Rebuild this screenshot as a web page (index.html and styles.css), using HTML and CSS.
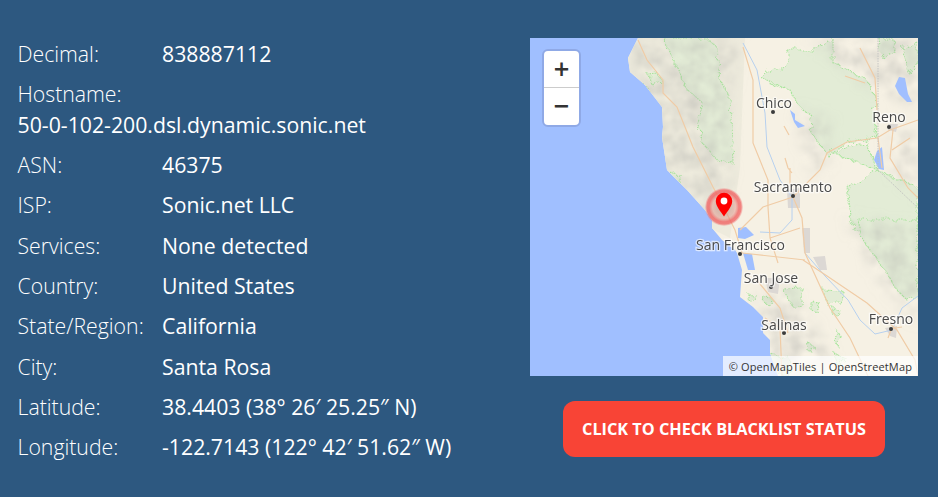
FILE: index.html
```html
<!DOCTYPE html>
<html lang="en">
<head>
<meta charset="utf-8">
<title>IP details</title>
<link rel="stylesheet" href="styles.css">
</head>
<body>
<main class="panel">
  <section class="details">
    <div class="row"><span class="label">Decimal:</span><span class="value">838887112</span></div>
    <div class="row stacked"><span class="label">Hostname:</span><span class="value">50-0-102-200.dsl.dynamic.sonic.net</span></div>
    <div class="row"><span class="label">ASN:</span><span class="value">46375</span></div>
    <div class="row"><span class="label">ISP:</span><span class="value">Sonic.net LLC</span></div>
    <div class="row"><span class="label">Services:</span><span class="value">None detected</span></div>
    <div class="row"><span class="label">Country:</span><span class="value">United States</span></div>
    <div class="row"><span class="label">State/Region:</span><span class="value">California</span></div>
    <div class="row"><span class="label">City:</span><span class="value">Santa Rosa</span></div>
    <div class="row"><span class="label">Latitude:</span><span class="value">38.4403 (38° 26′ 25.25″ N)</span></div>
    <div class="row"><span class="label">Longitude:</span><span class="value">-122.7143 (122° 42′ 51.62″ W)</span></div>
  </section>
  <section class="side">
    <div class="map">
      <svg class="tiles" viewBox="0 0 388 338" width="388" height="338">
        <defs>
          <filter id="hill" x="-20%" y="-20%" width="140%" height="140%">
            <feGaussianBlur in="SourceGraphic" stdDeviation="7" result="area"/>
            <feTurbulence type="fractalNoise" baseFrequency="0.07" numOctaves="3" seed="11"/>
            <feColorMatrix type="matrix" values="0 0 0 0 .45  0 0 0 0 .45  0 0 0 0 .42  .7 0 0 0 -.17"/>
            <feComposite in2="area" operator="in"/>
            <feGaussianBlur stdDeviation="1"/>
          </filter>
          <filter id="jag" x="-10%" y="-10%" width="120%" height="120%">
            <feTurbulence type="fractalNoise" baseFrequency="0.13" numOctaves="2" seed="7" result="n"/>
            <feDisplacementMap in="SourceGraphic" in2="n" scale="10"/>
            <feGaussianBlur stdDeviation="0.25"/>
          </filter>
          <filter id="raster"><feGaussianBlur stdDeviation="0.45"/></filter>
          <filter id="raster2"><feGaussianBlur stdDeviation="0.25"/></filter>
          <clipPath id="land"><path d="M108 0L98 20L100 34L115 47L132 69L133 89L132 99L137 132L157 152L175 172L182 182L182 190L192 202L205 212L207 215L212 232L211 245L210 259L223 269L233 279L233 295L240 302L240 315L248 338L388 338L388 0Z"/></clipPath>
          <radialGradient id="halo">
            <stop offset="0" stop-color="#a08a80" stop-opacity=".55"/>
            <stop offset=".6" stop-color="#e08a80" stop-opacity=".45"/>
            <stop offset=".78" stop-color="#f06060" stop-opacity=".8"/>
            <stop offset=".9" stop-color="#f06060" stop-opacity=".75"/>
            <stop offset="1" stop-color="#f08080" stop-opacity=".15"/>
          </radialGradient>
        </defs>
        <rect class="water" width="388" height="338"/>
        <g clip-path="url(#land)">
          <rect class="ground" width="388" height="338"/>
          <path class="coast-tint" d="M90 0L215 0L210 130L200 200L170 185L120 110Z"/>
          <g class="forest" filter="url(#jag)">
            <path d="M133 0L177 0L187 9L190 42L200 59L203 125L187 122L170 102L168 85L173 65L157 52Z"/>
            <path d="M257 12L283 12L303 2L303 25L337 42L347 62L343 82L347 99L317 104L297 117L280 92L283 79L270 69L260 52L233 42L240 32L257 29Z"/>
            <path d="M303 115L337 105L347 132L317 149L323 192L388 192L388 150L355 135Z"/>
            <path d="M327 182L388 182L388 259L377 262L367 252L350 225L333 202Z"/>
            <path d="M350 0L362 0L366 15L352 20Z"/>
            <path d="M372 10L388 5L388 30L378 34Z"/>
            <path d="M118 37L128 36L132 44L122 47Z"/>
            <path d="M102 42L115 47L120 55L112 58Z"/>
            <path d="M132 137L150 136L150 143L134 145Z"/>
            <path d="M168 178L178 180L176 188Z"/>
            <path d="M253 252L273 251L273 269L262 268Z"/>
            <path d="M293 252L313 253L310 265L296 265Z"/>
            <path d="M281 264L290 265L287 274L281 272Z"/>
            <path d="M303 270L310 272L308 278L303 277Z"/>
            <path d="M306 292L312 300L308 308L304 302Z"/>
            <path d="M278 305L286 310L282 314L277 312Z"/>
            <path d="M240 317L260 320L258 338L244 338Z"/>
            <path d="M305 316L315 320L312 328L305 325Z"/>
            <path d="M218 256L226 258L222 264L218 262Z"/>
            <path d="M232 258L240 260L238 266L234 264Z"/>
          </g>
          <g class="hills" filter="url(#hill)">
            <path d="M95 0L210 0L200 60L200 150L180 185L120 110Z"/>
            <path d="M275 0L388 0L388 70L340 50Z"/>
            <path d="M265 70L300 80L300 125L280 140Z"/>
            <path d="M225 255L260 250L305 320L265 338L235 315Z"/>
            <path d="M315 180L388 190L388 285L350 245Z"/>
            <path d="M355 95L388 90L388 160L365 140Z"/>
          </g>
          <g filter="url(#raster)">
            <g class="urban">
              <path d="M272 190L280 190L280 215L274 215Z"/>
              <path d="M283 219L295 218L297 232L290 232Z"/>
              <path d="M257 152L270 150L270 170L258 170Z"/>
              <path d="M358 86L368 86L366 94L358 92Z"/>
              <path d="M355 290L367 288L366 300L360 298Z"/>
              <path d="M235 240L250 240L248 256L238 254Z"/>
            </g>
            <g class="river">
              <path d="M213 5L227 32L235 75L237 109L250 142L262 159L262 182L250 195L230 194"/>
              <path d="M275 215L295 238L318 262L330 282L345 296L362 292L372 270L388 258"/>
            </g>
            <g class="lake">
              <path d="M208 190L216 189L224 197L215 201L208 200Z"/>
              <path d="M213 215L222 216L225 232L218 232Z"/>
              <path d="M352 109L354 132L349 131L344 122L347 113Z"/>
              <path d="M369 39L375 40L378 56L382 64L377 64L369 56L365 48Z"/>
              <path d="M260 72L265 76L265 82L275 88L268 90L264 84Z"/>
            </g>
            <g class="road">
              <path d="M108 2L117 22L133 42L133 55L147 69L163 109L183 149L190 162L205 192L212 215"/>
              <path d="M213 9L223 42L223 105L238 142L238 169L240 200L248 225"/>
              <path d="M263 159L233 169L210 192"/>
              <path d="M263 159L290 132L297 115L317 104L347 100L360 92L388 82"/>
              <path d="M263 159L272 180L275 215L290 248L300 270L320 300L338 338"/>
              <path d="M273 222L300 240L337 265L367 292L385 322L388 338"/>
              <path d="M240 200L270 190M212 215L275 222M225 240L250 270L258 295M235 280L250 290L252 338"/>
              <path d="M330 10L345 40L347 72M315 38L335 45M363 92L360 120L378 150L388 160M348 100L352 130M380 100L362 112"/>
              <path d="M254 88L259 97M255 120L258 130L262 135M260 130L260 146"/>
              <path d="M359 291L372 289M361 292L358 300"/>
            </g>
            <path class="border" d="M348 0L348 132L388 170"/>
          </g>
        </g>
        <g class="places" filter="url(#raster2)">
          <circle cx="243" cy="74" r="2"/>
          <circle cx="359" cy="89" r="2"/>
          <circle cx="263" cy="158" r="2"/>
          <circle cx="210" cy="216" r="2"/>
          <circle cx="241" cy="249" r="2"/>
          <circle cx="254" cy="295" r="2"/>
          <circle cx="361" cy="291" r="2"/>
          <text x="244" y="70">Chico</text>
          <text x="359" y="84">Reno</text>
          <text x="263" y="154">Sacramento</text>
          <text x="210.500" y="212">San Francisco</text>
          <text x="241" y="245">San Jose</text>
          <text x="254" y="292">Salinas</text>
          <text x="361" y="286">Fresno</text>
        </g>
        <circle cx="194" cy="169" r="19" fill="url(#halo)"/>
      </svg>
      <div class="zoom">
        <div class="zoom-btn zoom-in">+</div>
        <div class="zoom-btn">−</div>
      </div>
      <svg class="marker" viewBox="0 0 40 40" width="40" height="40">
        <path class="pin" d="M20 29.500C16.500 24 11.800 19.500 11.800 14A8.200 8.200 0 0 1 28.200 14C28.200 19.500 23.500 24 20 29.500Z"/>
        <circle class="pin-eye" cx="20" cy="14" r="3.400"/>
      </svg>
      <div class="attribution">© OpenMapTiles | OpenStreetMap</div>
    </div>
    <a class="cta" href="#">Click to check blacklist status</a>
  </section>
</main>
</body>
</html>
```

FILE: styles.css
```css
* { box-sizing: border-box; }
html, body { margin: 0; height: 100%; }
body {
  background: #2d5880;
  color: #fff;
  font-family: "Open Sans", "Liberation Sans", sans-serif;
}
.panel {
  display: flex;
  justify-content: space-between;
  padding: 38px 20px 0 17.500px;
}
.details {
  display: flex;
  flex-direction: column;
  gap: 9.300px;
  margin-top: -.45px;
  font-size: 21.250px;
  line-height: 31px;
}
.row { display: flex; }
.row.stacked { flex-direction: column; }
.label { font-weight: 300; width: 144.500px; flex: none; }
.value { font-weight: 400; white-space: nowrap; }
.side {
  width: 388px;
  display: flex;
  flex-direction: column;
  align-items: center;
  gap: 25px;
}
.map {
  position: relative;
  width: 388px;
  height: 338px;
  overflow: hidden;
  background: #a0bfff;
}
.tiles { display: block; }
.water { fill: #a0bfff; }
.ground { fill: #f6f1e4; }
.coast-tint { fill: #eeebdd; }
.hills path { fill: #000; }
.forest path {
  fill: #e3ecd6;
  stroke: #a8e69c;
  stroke-width: 1.200;
  stroke-dasharray: 1.500 1;
}
.urban path { fill: #dcd8d4; }
.river path { fill: none; stroke: #b6d0ef; stroke-width: 1; }
.lake path { fill: #a0bfff; }
.road path { fill: none; stroke: #f0cca6; stroke-width: 1.200; }
.border { fill: none; stroke: #bdbdbd; stroke-width: .8; stroke-dasharray: 1.500 1; }
.places circle { fill: #3a3a3a; }
.places text {
  font-family: "Open Sans", "Noto Sans", sans-serif;
  font-size: 14px;
  text-anchor: middle;
  fill: #4a4a4a;
  stroke: rgba(255, 255, 255, .65);
  stroke-width: 2.500px;
  paint-order: stroke;
}
.zoom {
  position: absolute;
  left: 12px;
  top: 11px;
  width: 39px;
  border: 2px solid #8fa9e6;
  border-radius: 6px;
  background: #fff;
  overflow: hidden;
}
.zoom-btn {
  height: 37px;
  display: flex;
  align-items: center;
  justify-content: center;
  font-family: "DejaVu Sans", sans-serif;
  font-size: 21px;
  font-weight: 700;
  color: #333;
  line-height: 1;
}
.zoom-in { border-bottom: 1px solid #ccc; }
.marker { position: absolute; left: 174px; top: 149px; }
.pin { fill: #f00; }
.pin-eye { fill: #fff; }
.attribution {
  position: absolute;
  right: 0;
  bottom: 0;
  height: 20px;
  padding: 0 6px;
  background: rgba(255, 255, 255, .7);
  color: #333;
  font-size: 11px;
  letter-spacing: .13px;
  line-height: 21px;
}
.cta {
  display: block;
  width: 322px;
  height: 56px;
  border-radius: 12px;
  background: #f84436;
  color: #fff;
  font-size: 16.250px;
  font-weight: 700;
  line-height: 56px;
  text-align: center;
  text-transform: uppercase;
  text-decoration: none;
}
```
